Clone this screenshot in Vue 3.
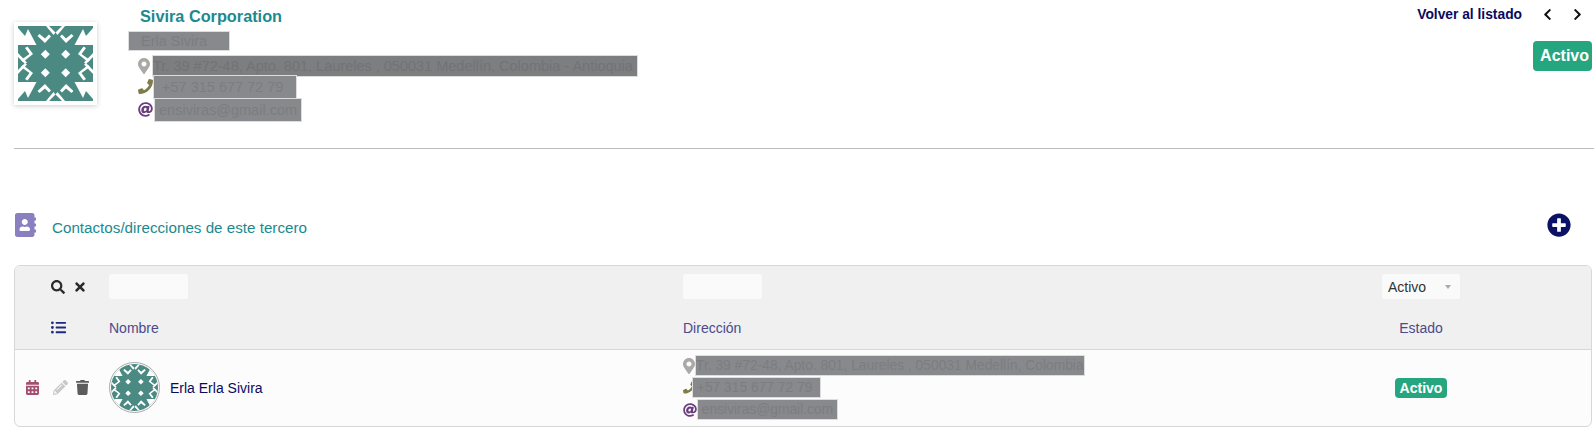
<template>
  <div class="page">
    <section class="company">
      <div class="logo">
        <svg viewBox="0 0 75 75" width="75" height="75">
          <rect width="75" height="75" fill="#4a8a82" />
          <g v-for="t in mirrors" :key="t" :transform="t">
            <polygon v-for="p in whiteShapes" :key="p" :points="p" fill="#fff" />
          </g>
        </svg>
      </div>
      <div class="company-info">
        <h2 class="company-name">Sivira Corporation</h2>
        <div class="contact-person"><span class="redact person-bar">Erla Sivira</span></div>
        <div class="lines">
          <div class="line">
            <svg class="ico" viewBox="0 0 384 512" width="12" height="16"><path :d="icons.marker" fill="#aaa9a5" /></svg>
            <span class="redact dark">Tr. 39 #72-48, Apto. 801, Laureles , 050031 Medellín, Colombia - Antioquia&nbsp;</span>
          </div>
          <div class="line">
            <svg class="ico phone" viewBox="0 0 512 512" width="15" height="15"><path :d="icons.phone" fill="#7e7d48" /></svg>
            <span class="redact tall">&nbsp;&nbsp;+57 315 677 72 79&nbsp;&nbsp;&nbsp;</span>
          </div>
          <div class="line mail">
            <svg class="ico at" viewBox="0 0 512 512" width="15" height="15"><path :d="icons.at" fill="#6b3d7d" /></svg>
            <span class="redact tall">&nbsp;ensiviras@gmail.com&nbsp;</span>
          </div>
        </div>
      </div>
      <div class="company-actions">
        <div class="nav">
          <a class="back">Volver al listado</a>
          <svg viewBox="0 0 320 512" width="11" height="13"><path :d="icons.chevronLeft" fill="#111" /></svg>
          <svg viewBox="0 0 320 512" width="11" height="13"><path :d="icons.chevronRight" fill="#111" /></svg>
        </div>
        <span class="status big">Activo</span>
      </div>
    </section>

    <hr class="divider" />

    <div class="section-title">
      <svg viewBox="0 0 448 512" width="21" height="24"><path :d="icons.addressBook" fill="#8a80bf" /></svg>
      <span class="section-text">Contactos/direcciones de este tercero</span>
      <svg class="add" viewBox="0 0 512 512" width="24" height="24"><path :d="icons.plusCircle" fill="#0b1164" /></svg>
    </div>

    <div class="table">
      <div class="row filters">
        <div class="tools">
          <svg viewBox="0 0 512 512" width="14" height="14"><path :d="icons.search" fill="#2b2b2b" /></svg>
          <svg viewBox="0 0 352 512" width="10" height="14"><path :d="icons.times" fill="#2b2b2b" /></svg>
        </div>
        <div><div class="input"></div></div>
        <div><div class="input"></div></div>
        <div class="select">
          <span>Activo</span>
          <i class="caret"></i>
        </div>
      </div>
      <div class="row titles">
        <div class="tools">
          <svg viewBox="0 0 512 512" width="15" height="15"><path :d="icons.list" fill="#1f2a7a" /></svg>
        </div>
        <div>Nombre</div>
        <div>Dirección</div>
        <div class="center">Estado</div>
      </div>
      <div class="row body">
        <div class="actions">
          <svg viewBox="0 0 448 512" width="13" height="15"><path :d="icons.calendar" fill="#a34f6f" /></svg>
          <svg class="pencil" viewBox="0 0 512 512" width="15" height="15"><path :d="icons.pencil" fill="#c9c9c9" /></svg>
          <svg viewBox="0 0 448 512" width="13" height="15"><path :d="icons.trash" fill="#5c5c5c" /></svg>
        </div>
        <div class="person">
          <div class="avatar">
            <svg viewBox="0 0 75 75" width="47" height="47">
              <rect width="75" height="75" fill="#4a8a82" />
              <g v-for="t in mirrors" :key="t" :transform="t">
                <polygon v-for="p in whiteShapes" :key="p" :points="p" fill="#fff" />
              </g>
            </svg>
          </div>
          <span class="person-name">Erla Erla Sivira</span>
        </div>
        <div class="address">
          <div class="line">
            <svg class="ico marker" viewBox="0 0 384 512" width="12" height="16"><path :d="icons.marker" fill="#aaa9a5" /></svg>
            <span class="redact">Tr. 39 #72-48, Apto. 801, Laureles , 050031 Medellín, Colombia</span>
          </div>
          <div class="line">
            <svg class="ico tel" viewBox="0 0 512 512" width="12" height="15"><path :d="icons.phone" fill="#7e7d48" /></svg>
            <span class="redact">&nbsp;+57 315 677 72 79&nbsp;&nbsp;</span>
          </div>
          <div class="line">
            <svg class="ico at-small" viewBox="0 0 512 512" width="14" height="14"><path :d="icons.at" fill="#6b3d7d" /></svg>
            <span class="redact">&nbsp;ensiviras@gmail.com&nbsp;</span>
          </div>
        </div>
        <div class="center"><span class="status">Activo</span></div>
      </div>
    </div>
  </div>
</template>

<script setup>
// identicon: un cuadrante, los otros tres salen por simetría
const whiteShapes = [
  '0,2 7,10 10,3 18.5,19 0,19',
  '19.5,10 21.5,8 27,12.5 31,8.5 33,10.5 27,17',
  '28,0 31,0 37.5,6.5 35.5,9',
  '7,22 9.5,20.5 15,28 5,36 3,34 11.5,28',
  '0,27 9,36.5 7,38 0,31',
  '27.3,23.8 31.8,28.3 27.3,32.8 22.8,28.3'
]
const mirrors = [
  'translate(0 0)',
  'translate(75 0) scale(-1 1)',
  'translate(0 75) scale(1 -1)',
  'translate(75 75) scale(-1 -1)'
]

const icons = {
  marker: 'M172.268 501.67C26.97 291.031 0 269.413 0 192 0 85.961 85.961 0 192 0s192 85.961 192 192c0 77.413-26.97 99.031-172.268 309.67-9.535 13.774-29.93 13.773-39.464 0zM192 272c44.183 0 80-35.817 80-80s-35.817-80-80-80-80 35.817-80 80 35.817 80 80 80z',
  phone: 'M493.4 24.6l-104-24c-11.3-2.6-22.9 3.3-27.5 13.9l-48 112c-4.2 9.8-1.4 21.3 6.9 28l60.6 49.6c-36 76.7-98.9 140.5-177.2 177.2l-49.6-60.6c-6.8-8.3-18.2-11.1-28-6.9l-112 48C3.9 366.5-2 378.1.6 389.4l24 104C27.1 504.2 36.7 512 48 512c256.1 0 464-207.5 464-464 0-11.2-7.7-20.9-18.6-23.4z',
  at: 'M256 8C118.941 8 8 118.919 8 256c0 137.059 110.919 248 248 248 48.154 0 95.342-14.14 135.408-40.223 12.005-7.815 14.625-24.288 5.552-35.372l-10.177-12.433c-7.671-9.371-21.179-11.667-31.373-5.129C325.92 429.757 291.314 440 256 440c-101.458 0-184-82.542-184-184S154.542 72 256 72c100.139 0 184 57.619 184 160 0 38.786-21.093 79.742-58.17 83.693-17.349-.454-16.91-12.857-13.476-30.024l23.433-121.11C394.653 149.75 383.308 136 368.225 136h-44.981a13.518 13.518 0 0 0-13.432 11.993l-.01.092c-14.697-17.901-40.448-21.775-59.971-21.775-74.58 0-137.831 62.234-137.831 151.46 0 65.303 36.785 105.87 96 105.87 26.984 0 57.369-15.637 74.991-38.333 9.522 34.104 40.613 34.103 70.71 34.103C462.609 379.41 504 307.798 504 232 504 95.653 394.023 8 256 8zm-21.68 304.43c-22.249 0-36.07-15.623-36.07-40.771 0-44.993 30.779-72.729 58.63-72.729 22.292 0 35.601 15.241 35.601 40.77 0 45.061-33.875 72.73-58.161 72.73z',
  chevronLeft: 'M34.52 239.03L228.87 44.69c9.37-9.37 24.57-9.37 33.94 0l22.67 22.67c9.36 9.36 9.37 24.52.04 33.9L131.49 256l154.02 154.75c9.34 9.38 9.32 24.54-.04 33.9l-22.67 22.67c-9.37 9.37-24.57 9.37-33.94 0L34.52 272.97c-9.37-9.37-9.37-24.57 0-33.94z',
  chevronRight: 'M285.476 272.971L91.132 467.314c-9.373 9.373-24.569 9.373-33.941 0l-22.667-22.667c-9.357-9.357-9.375-24.522-.04-33.901L188.505 256 34.484 101.255c-9.335-9.379-9.317-24.544.04-33.901l22.667-22.667c9.373-9.373 24.569-9.373 33.941 0L285.475 239.03c9.373 9.372 9.373 24.568.001 33.941z',
  addressBook: 'M436 160c6.6 0 12-5.4 12-12v-40c0-6.6-5.4-12-12-12h-20V48c0-26.5-21.5-48-48-48H48C21.5 0 0 21.5 0 48v416c0 26.5 21.5 48 48 48h320c26.5 0 48-21.5 48-48v-48h20c6.6 0 12-5.4 12-12v-40c0-6.6-5.4-12-12-12h-20v-64h20c6.6 0 12-5.4 12-12v-40c0-6.6-5.4-12-12-12h-20v-64h20zm-228-32c35.3 0 64 28.7 64 64s-28.7 64-64 64-64-28.7-64-64 28.7-64 64-64zm112 236.8c0 10.6-10 19.2-22.4 19.2H118.4C106 384 96 375.4 96 364.8v-19.2c0-31.8 30.1-57.6 67.2-57.6h5c12.3 5.1 25.7 8 39.8 8s27.6-2.9 39.8-8h5c37.1 0 67.2 25.8 67.2 57.6v19.2z',
  plusCircle: 'M256 8C119 8 8 119 8 256s111 248 248 248 248-111 248-248S393 8 256 8zm144 276c0 6.6-5.4 12-12 12h-92v92c0 6.6-5.4 12-12 12h-56c-6.6 0-12-5.4-12-12v-92h-92c-6.6 0-12-5.4-12-12v-56c0-6.6 5.4-12 12-12h92v-92c0-6.6 5.4-12 12-12h56c6.6 0 12 5.4 12 12v92h92c6.6 0 12 5.4 12 12v56z',
  search: 'M505 442.7L405.3 343c-4.5-4.5-10.6-7-17-7H372c27.6-35.3 44-79.7 44-128C416 93.1 322.9 0 208 0S0 93.1 0 208s93.1 208 208 208c48.3 0 92.7-16.4 128-44v16.3c0 6.4 2.5 12.5 7 17l99.7 99.7c9.4 9.4 24.6 9.4 33.9 0l28.3-28.3c9.4-9.4 9.4-24.6.1-34zM208 336c-70.7 0-128-57.2-128-128 0-70.7 57.2-128 128-128 70.7 0 128 57.2 128 128 0 70.7-57.2 128-128 128z',
  times: 'M242.72 256l100.07-100.07c12.28-12.28 12.28-32.19 0-44.48l-22.24-22.24c-12.28-12.28-32.19-12.28-44.48 0L176 189.28 75.93 89.21c-12.28-12.28-32.19-12.28-44.48 0L9.21 111.45c-12.28 12.28-12.28 32.19 0 44.48L109.28 256 9.21 356.07c-12.28 12.28-12.28 32.19 0 44.48l22.24 22.24c12.28 12.28 32.2 12.28 44.48 0L176 322.72l100.07 100.07c12.28 12.28 32.2 12.28 44.48 0l22.24-22.24c12.28-12.28 12.28-32.19 0-44.48L242.72 256z',
  list: 'M48 48a48 48 0 1 0 48 48 48 48 0 0 0-48-48zm0 160a48 48 0 1 0 48 48 48 48 0 0 0-48-48zm0 160a48 48 0 1 0 48 48 48 48 0 0 0-48-48zm448 16H176a16 16 0 0 0-16 16v32a16 16 0 0 0 16 16h320a16 16 0 0 0 16-16v-32a16 16 0 0 0-16-16zm0-320H176a16 16 0 0 0-16 16v32a16 16 0 0 0 16 16h320a16 16 0 0 0 16-16V80a16 16 0 0 0-16-16zm0 160H176a16 16 0 0 0-16 16v32a16 16 0 0 0 16 16h320a16 16 0 0 0 16-16v-32a16 16 0 0 0-16-16z',
  calendar: 'M0 464c0 26.5 21.5 48 48 48h352c26.5 0 48-21.5 48-48V192H0v272zm320-196c0-6.6 5.4-12 12-12h40c6.6 0 12 5.4 12 12v40c0 6.6-5.4 12-12 12h-40c-6.6 0-12-5.4-12-12v-40zm0 128c0-6.6 5.4-12 12-12h40c6.6 0 12 5.4 12 12v40c0 6.6-5.4 12-12 12h-40c-6.6 0-12-5.4-12-12v-40zM192 268c0-6.6 5.4-12 12-12h40c6.6 0 12 5.4 12 12v40c0 6.6-5.4 12-12 12h-40c-6.6 0-12-5.4-12-12v-40zm0 128c0-6.6 5.4-12 12-12h40c6.6 0 12 5.4 12 12v40c0 6.6-5.4 12-12 12h-40c-6.6 0-12-5.4-12-12v-40zM64 268c0-6.6 5.4-12 12-12h40c6.6 0 12 5.4 12 12v40c0 6.6-5.4 12-12 12H76c-6.6 0-12-5.4-12-12v-40zm0 128c0-6.6 5.4-12 12-12h40c6.6 0 12 5.4 12 12v40c0 6.6-5.4 12-12 12H76c-6.6 0-12-5.4-12-12v-40zM400 64h-48V16c0-8.8-7.2-16-16-16h-32c-8.8 0-16 7.2-16 16v48H160V16c0-8.8-7.2-16-16-16h-32c-8.8 0-16 7.2-16 16v48H48C21.5 64 0 85.5 0 112v48h448v-48c0-26.5-21.5-48-48-48z',
  pencil: 'M497.9 142.1l-46.1 46.1c-4.7 4.7-12.3 4.7-17 0l-111-111c-4.7-4.7-4.7-12.3 0-17l46.1-46.1c18.7-18.7 49.1-18.7 67.9 0l60.1 60.1c18.8 18.7 18.8 49.1 0 67.9zM284.2 99.8L21.6 362.4.4 483.9c-2.9 16.4 11.4 30.6 27.8 27.8l121.5-21.3 262.6-262.6c4.7-4.7 4.7-12.3 0-17l-111-111c-4.8-4.7-12.4-4.7-17.1 0zM124.1 339.9c-5.5-5.5-5.5-14.3 0-19.8l154-154c5.5-5.5 14.3-5.5 19.8 0s5.5 14.3 0 19.8l-154 154c-5.5 5.5-14.3 5.5-19.8 0zM88 424h48v36.3l-64.5 11.3-31.1-31.1L51.7 376H88v48z',
  trash: 'M432 32H312l-9.4-18.7A24 24 0 0 0 281.1 0H166.8a23.72 23.72 0 0 0-21.4 13.3L136 32H16A16 16 0 0 0 0 48v32a16 16 0 0 0 16 16h416a16 16 0 0 0 16-16V48a16 16 0 0 0-16-16zM53.2 467a48 48 0 0 0 47.9 45h245.8a48 48 0 0 0 47.9-45L416 128H32z'
}
</script>

<style>
html, body {
  background: #fff;
}
</style>

<style scoped>
.page {
  font-family: "Liberation Sans", Arial, sans-serif;
  font-size: 14px;
  color: #333;
  height: 428px;
  overflow: hidden;
  padding: 0 2px 0 14px;
  box-sizing: border-box;
}

.company {
  display: flex;
  height: 148px;
}

.logo {
  width: 75px;
  height: 75px;
  padding: 4px;
  margin-top: 22px;
  background: #fff;
  box-shadow: 0 1px 5px rgba(0, 0, 0, 0.2);
}

.logo svg {
  display: block;
}

.company-info {
  margin-left: 31px;
  flex: 1;
}

.company-name {
  margin: 7px 0 0 12px;
  font-size: 16.3px;
  line-height: 19px;
  font-weight: bold;
  color: #1b8a8f;
}

.contact-person {
  margin-top: 6px;
  height: 18px;
  line-height: 18px;
  font-size: 14.5px;
  padding-left: 1px;
}

.redact {
  background: #88898c;
  color: #7c7d80;
  box-shadow: 0 0 0 1px #ddd;
  padding: 2px 0;
}

.redact.person-bar {
  display: inline-block;
  line-height: 18px;
  padding: 0 0 0 12px;
  width: 100px;
  box-sizing: border-box;
}

.redact.dark {
  background: #7d7e80;
  color: #727376;
}

.redact.tall {
  padding: 3px 0;
}

.lines {
  margin: 5px 0 0 10px;
  font-size: 14.5px;
}

.line {
  display: flex;
  align-items: center;
  height: 21px;
  white-space: nowrap;
}

.line.mail {
  margin-top: 2px;
}

.ico {
  flex: none;
  margin-right: 3px;
}

.ico.phone {
  margin-right: 1px;
}

.ico.at {
  margin-right: 2px;
}

.company-actions {
  display: flex;
  flex-direction: column;
  align-items: flex-end;
}

.nav {
  display: flex;
  align-items: center;
  gap: 19px;
  height: 14px;
  margin-top: 7px;
  padding-right: 11px;
}

.back {
  font-size: 13.8px;
  font-weight: bold;
  color: #0a0a5e;
  margin-right: 1px;
}

.status {
  display: inline-block;
  background: #26a67f;
  color: #fff;
  font-weight: bold;
  font-size: 14px;
  line-height: 20px;
  padding: 0 5px;
  border-radius: 4px;
}

.status.big {
  margin: 20px 2px 0 0;
  font-size: 16px;
  line-height: 30px;
  padding: 0 3px 0 7px;
}

.divider {
  margin: 0;
  border: 0;
  border-top: 1px solid #bbb;
}

.section-title {
  display: flex;
  align-items: center;
  height: 24px;
  margin-top: 64px;
  padding-left: 1px;
}

.section-text {
  margin: 5px 0 0 16px;
  font-size: 15.2px;
  color: #1b8a8f;
}

.add {
  margin-left: auto;
  margin-right: 23px;
}

.table {
  margin-top: 28px;
  width: 1578px;
  height: 162px;
  box-sizing: border-box;
  border: 1px solid #d8d8d8;
  border-radius: 6px;
  background: #fcfcfc;
  overflow: hidden;
}

.row {
  display: grid;
  grid-template-columns: 94px 574px 699px 78px 1fr;
  align-items: center;
}

.filters {
  height: 42px;
  background: #f0f0f0;
  padding-top: 8px;
  box-sizing: border-box;
  align-items: start;
}

.titles {
  height: 42px;
  box-sizing: border-box;
  padding-bottom: 2px;
  background: #f0f0f0;
  border-bottom: 1px solid #d8d8d8;
  color: #4a4a8c;
  font-size: 14px;
}

.tools {
  display: flex;
  align-items: center;
  gap: 10px;
  padding-left: 36px;
  height: 25px;
}

.input {
  width: 79px;
  height: 25px;
  background: #fafafa;
  border-radius: 3px;
}

.select {
  display: flex;
  align-items: center;
  justify-content: space-between;
  height: 25px;
  padding: 0 9px 0 6px;
  background: #fafafa;
  border-radius: 3px;
  font-size: 14px;
}

.caret {
  width: 0;
  height: 0;
  border-left: 3px solid transparent;
  border-right: 3px solid transparent;
  border-top: 4px solid #aaa;
}

.center {
  text-align: center;
}

.body {
  height: 75px;
}

.actions {
  display: flex;
  align-items: center;
  gap: 11px;
  padding-left: 11px;
}

.pencil {
  margin: 0 -3px 0 3px;
}

.person {
  display: flex;
  align-items: center;
}

.avatar {
  width: 49px;
  height: 49px;
  border: 1px solid #aaa;
  border-radius: 50%;
  overflow: hidden;
  display: flex;
  align-items: center;
  justify-content: center;
}

.avatar svg {
  border-radius: 50%;
}

.person-name {
  margin-left: 10px;
  font-size: 14px;
  color: #0a0a5e;
}

.address {
  font-size: 13.8px;
}

.address .line {
  height: 22px;
}

.address .ico {
  margin-right: 0;
}

.address .ico.marker {
  margin-right: 1px;
}

.address .ico.tel {
  margin-right: -2px;
}

.address .ico.at-small {
  margin-right: 1px;
}
</style>
